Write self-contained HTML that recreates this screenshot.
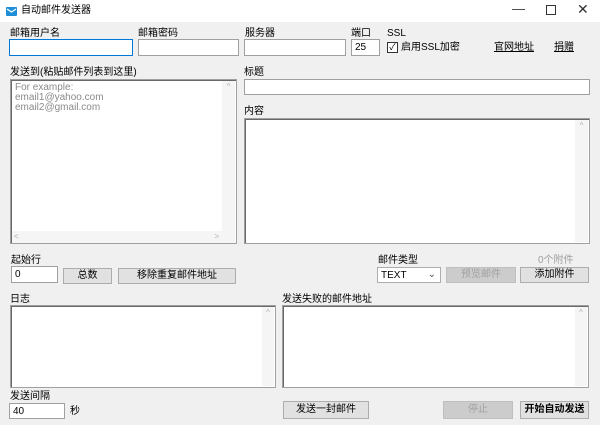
<!DOCTYPE html>
<html><head><meta charset="utf-8"><style>
*{box-sizing:border-box;margin:0;padding:0}
body{width:600px;height:425px;background:#f0f0f0;font-family:"Liberation Sans","Noto Sans CJK SC",sans-serif;font-size:10px;line-height:12px;color:#000;position:relative;overflow:hidden}
.a{position:absolute;white-space:nowrap;line-height:12px}
.tb{position:absolute;left:0;top:0;width:600px;height:22px;background:#fff}
.in{position:absolute;background:#fff;border:1px solid #a0a0a0;font-size:10px;padding:1px 3px;line-height:13px}
.ta{position:absolute;background:#fff;border:1px solid #a0a0a0;box-shadow:inset 1px 1px 0 #696969}
.btn{position:absolute;background:#e1e1e1;border:1px solid #adadad;text-align:center;line-height:14px;font-size:10px}
.dis{color:#a0a0a0;background:#cccccc;border-color:#bfbfbf}
.sb{position:absolute;background:#f5f5f5;color:#b0b0b0;font-size:8px;text-align:center;line-height:12px}
</style></head><body>
<div class="tb"></div>
<svg class="a" style="left:6px;top:7px" width="11" height="9"><rect x="0" y="0" width="11" height="9" rx="1" fill="#1e8fd6"/><path d="M1 2 L5.5 5 L10 2" stroke="#fff" fill="none" stroke-width="1.2"/></svg>
<div class="a" style="left:21px;top:5px">自动邮件发送器</div>
<div class="a" style="left:512px;top:3px;font-size:13px;color:#333">&#8212;</div>
<div class="a" style="left:546px;top:5px;width:10px;height:10px;border:1px solid #333"></div>
<div class="a" style="left:577px;top:3px;font-size:14px;color:#333">&#x2715;</div>

<div class="a" style="left:10px;top:28px">邮箱用户名</div>
<div class="in" style="left:9px;top:39px;width:124px;height:17px;border-color:#0078d7"></div>
<div class="a" style="left:138px;top:28px">邮箱密码</div>
<div class="in" style="left:138px;top:39px;width:101px;height:17px"></div>
<div class="a" style="left:245px;top:28px">服务器</div>
<div class="in" style="left:244px;top:39px;width:102px;height:17px"></div>
<div class="a" style="left:351px;top:28px">端口</div>
<div class="in" style="left:351px;top:39px;width:29px;height:17px">25</div>
<div class="a" style="left:387px;top:28px">SSL</div>
<div class="a" style="left:387px;top:42px;width:11px;height:11px;border:1px solid #333;background:#fff;font-size:9px;line-height:9px;text-align:center">✓</div>
<div class="a" style="left:401px;top:42px">启用SSL加密</div>
<div class="a" style="left:494px;top:42px;text-decoration:underline">官网地址</div>
<div class="a" style="left:554px;top:42px;text-decoration:underline">捐赠</div>

<div class="a" style="left:10px;top:67px">发送到(粘贴邮件列表到这里)</div>
<div class="ta" style="left:10px;top:79px;width:227px;height:165px"></div>
<div class="a" style="left:15px;top:83px;color:#8a8a8a;line-height:10px">For example:<br>email1@yahoo.com<br>email2@gmail.com</div>
<div class="sb" style="left:222px;top:81px;width:13px;height:150px">^</div>
<div class="sb" style="left:12px;top:231px;width:223px;height:12px;text-align:left;padding-left:2px">&lt;<span style="position:absolute;right:16px">&gt;</span></div>
<div class="a" style="left:244px;top:67px">标题</div>
<div class="in" style="left:244px;top:79px;width:346px;height:16px"></div>
<div class="a" style="left:244px;top:106px">内容</div>
<div class="ta" style="left:244px;top:118px;width:346px;height:126px"></div>
<div class="sb" style="left:575px;top:120px;width:13px;height:122px">^</div>

<div class="a" style="left:11px;top:255px">起始行</div>
<div class="in" style="left:11px;top:266px;width:47px;height:17px">0</div>
<div class="btn" style="left:63px;top:268px;width:49px;height:16px">总数</div>
<div class="btn" style="left:118px;top:268px;width:118px;height:16px">移除重复邮件地址</div>
<div class="a" style="left:378px;top:255px">邮件类型</div>
<div class="in" style="left:377px;top:267px;width:64px;height:16px;border-color:#adadad">TEXT<span style="position:absolute;right:4px;top:0px;color:#555">⌄</span></div>
<div class="btn dis" style="left:446px;top:267px;width:70px;height:16px">预览邮件</div>
<div class="a" style="left:538px;top:255px;color:#a0a0a0">0个附件</div>
<div class="btn" style="left:520px;top:267px;width:69px;height:16px">添加附件</div>

<div class="a" style="left:10px;top:294px">日志</div>
<div class="ta" style="left:10px;top:305px;width:266px;height:83px"></div>
<div class="sb" style="left:262px;top:307px;width:12px;height:79px">^</div>
<div class="a" style="left:282px;top:294px">发送失败的邮件地址</div>
<div class="ta" style="left:282px;top:305px;width:307px;height:83px"></div>
<div class="sb" style="left:575px;top:307px;width:12px;height:79px">^</div>

<div class="a" style="left:10px;top:391px">发送间隔</div>
<div class="in" style="left:9px;top:403px;width:56px;height:16px">40</div>
<div class="a" style="left:70px;top:406px">秒</div>
<div class="btn" style="left:283px;top:401px;width:86px;height:18px;line-height:16px">发送一封邮件</div>
<div class="btn dis" style="left:443px;top:401px;width:70px;height:18px;line-height:16px">停止</div>
<div class="btn" style="left:520px;top:401px;width:69px;height:18px;line-height:16px;font-weight:bold">开始自动发送</div>
</body></html>
